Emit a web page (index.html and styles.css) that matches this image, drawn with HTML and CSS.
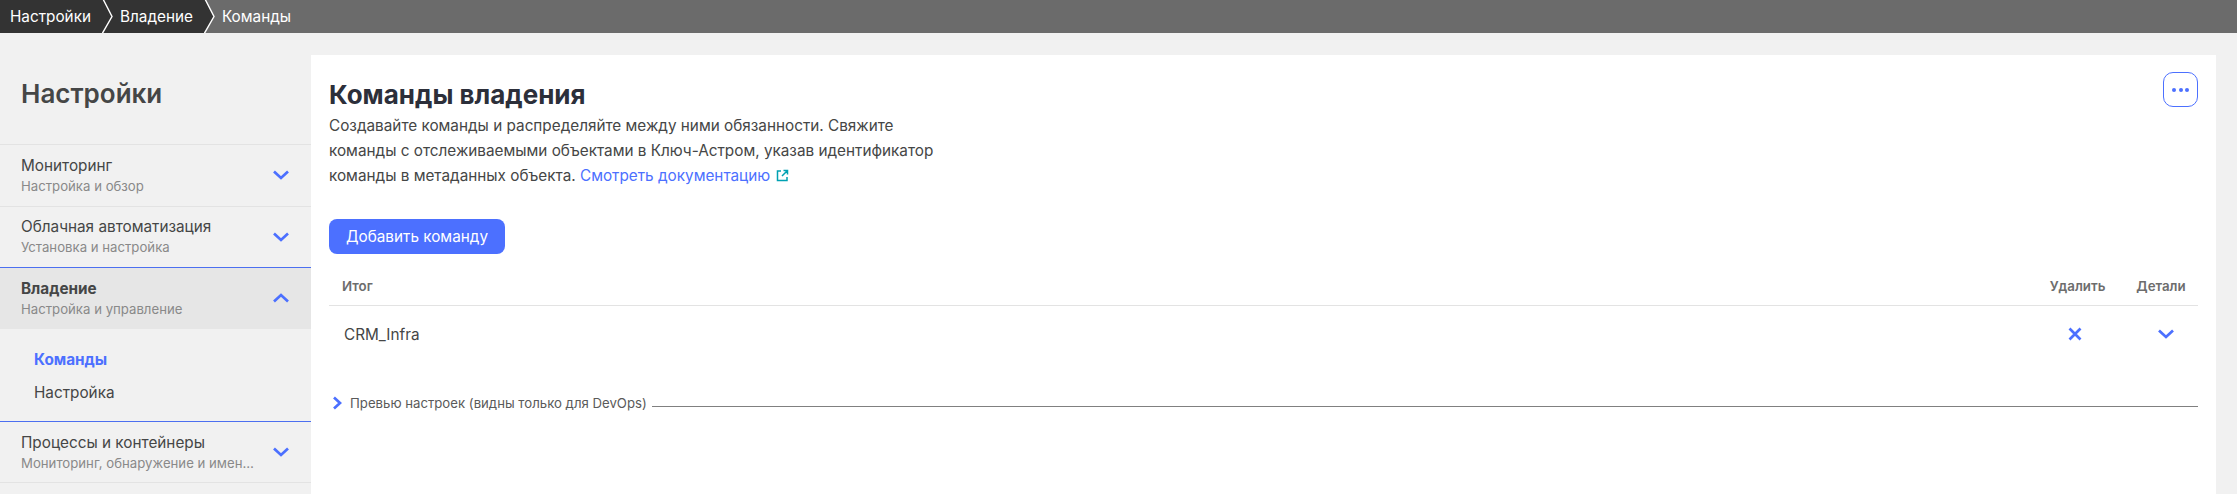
FILE: index.html
```html
<!DOCTYPE html>
<html lang="ru">
<head>
  <meta charset="UTF-8">
  <title>Команды владения</title>
  <link rel="stylesheet" href="styles.css">
</head>
<body>
  <nav class="crumbs">
    <a class="crumb">Настройки</a>
    <svg class="crumb-sep" width="11" height="33" viewBox="0 0 11 33"><path d="M1 -1 L10 16.5 L0 34" fill="none" stroke="#fff" stroke-width="1.4"/></svg>
    <a class="crumb">Владение</a>
    <svg class="crumb-sep crumb-sep-end" width="11" height="33" viewBox="0 0 11 33"><path d="M1 -1 L10 16.5 L0 34 L0 -1 Z" fill="#333"/><path d="M1 -1 L10 16.5 L0 34" fill="none" stroke="#fff" stroke-width="1.4"/></svg>
    <a class="crumb crumb-last">Команды</a>
  </nav>

  <div class="layout">
    <aside class="sidebar">
      <h2 class="sidebar-title">Настройки</h2>

      <div class="nav-item">
        <div class="nav-text">
          <div class="nav-name">Мониторинг</div>
          <div class="nav-sub">Настройка и обзор</div>
        </div>
        <svg class="chev" width="18" height="12" viewBox="0 0 18 12"><path d="M2 2.5 L9 9 L16 2.5"/></svg>
      </div>
      <div class="nav-item">
        <div class="nav-text">
          <div class="nav-name">Облачная автоматизация</div>
          <div class="nav-sub">Установка и настройка</div>
        </div>
        <svg class="chev" width="18" height="12" viewBox="0 0 18 12"><path d="M2 2.5 L9 9 L16 2.5"/></svg>
      </div>
      <div class="nav-item nav-open">
        <div class="nav-text">
          <div class="nav-name">Владение</div>
          <div class="nav-sub">Настройка и управление</div>
        </div>
        <svg class="chev" width="18" height="12" viewBox="0 0 18 12"><path d="M2 9.5 L9 3 L16 9.5"/></svg>
      </div>
      <div class="subnav">
        <a class="subnav-link active">Команды</a>
        <a class="subnav-link">Настройка</a>
      </div>
      <div class="nav-item">
        <div class="nav-text">
          <div class="nav-name">Процессы и контейнеры</div>
          <div class="nav-sub">Мониторинг, обнаружение и именование</div>
        </div>
        <svg class="chev" width="18" height="12" viewBox="0 0 18 12"><path d="M2 2.5 L9 9 L16 2.5"/></svg>
      </div>
    </aside>

    <main class="card">
      <div class="card-head">
        <div class="intro">
          <h1>Команды владения</h1>
          <p>Создавайте команды и распределяйте между ними обязанности. Свяжите команды с отслеживаемыми объектами в Ключ-Астром, указав идентификатор команды в метаданных объекта. <a class="doc-link">Смотреть документацию</a>
            <svg class="ext" width="13" height="13" viewBox="0 0 13 13"><path d="M5 2 H1.5 V11.5 H11 V8 M7.5 1.5 H11.5 V5.5 M11.5 1.5 L6 7"/></svg>
          </p>
        </div>
        <button class="more"><span></span><span></span><span></span></button>
      </div>

      <button class="btn-add">Добавить команду</button>

      <div class="table-head">
        <div class="col-name">Итог</div>
        <div class="col-del">Удалить</div>
        <div class="col-det">Детали</div>
      </div>
      <div class="table-row">
        <div class="col-name">CRM_Infra</div>
        <div class="col-del">
          <svg class="icon icon-x" width="16" height="16" viewBox="0 0 16 16"><path d="M2.5 2.5 L13.5 13.5 M13.5 2.5 L2.5 13.5"/></svg>
        </div>
        <div class="col-det">
          <svg class="icon icon-chev" width="18" height="12" viewBox="0 0 18 12"><path d="M2 2.5 L9 9 L16 2.5"/></svg>
        </div>
      </div>

      <div class="preview">
        <svg class="icon" width="10" height="14" viewBox="0 0 10 14"><path d="M2 1.5 L8 7 L2 12.5"/></svg>
        <span class="preview-text">Превью настроек (видны только для DevOps)</span>
        <span class="preview-line"></span>
      </div>
    </main>
  </div>
</body>
</html>
```

FILE: styles.css
```css
* { box-sizing: border-box; }
html, body { height: 100%; }
body {
  margin: 0;
  background: #f1f1f1;
  font-family: Inter, "Noto Sans", sans-serif;
  color: #454646;
  overflow: hidden;
}

.crumbs {
  display: flex;
  align-items: center;
  height: 33px;
  background: #6b6b6b;
  color: #fff;
  font-size: 15.3px;
}
.crumb {
  display: flex;
  align-items: center;
  height: 33px;
  padding: 0 11px 0 10px;
  background: #333;
  white-space: nowrap;
}
.crumb-sep { background: #333; flex: none; }
.crumb-sep-end { background: #6b6b6b; }
.crumb-sep + .crumb { padding-left: 7px; }
.crumb-sep + .crumb-last { background: none; padding-left: 7px; }

.layout { display: flex; height: 461px; }

.sidebar { width: 311px; flex: none; }
.sidebar-title {
  margin: 0;
  padding: 44px 0 0 21px;
  height: 111px;
  font-size: 26px;
  line-height: 34px;
  font-weight: 600;
  color: #454646;
}
.nav-item {
  display: flex;
  align-items: center;
  justify-content: space-between;
  height: 61.5px;
  padding: 0 21px 0 21px;
  border-top: 1px solid #e3e3e3;
}
.nav-item:last-child { border-bottom: 1px solid #e3e3e3; height: 62px; }
.nav-text { min-width: 0; padding-top: 1px; }
.nav-name { font-size: 15.3px; line-height: 21px; color: #454646; }
.nav-sub {
  font-size: 13.2px;
  line-height: 21px;
  color: #898989;
  width: 234px;
  white-space: nowrap;
  overflow: hidden;
  text-overflow: ellipsis;
}
.nav-open {
  background: #e6e6e6;
  border-top: 1px solid #4c6ff0;
}
.nav-open .nav-name { font-weight: 700; }
.chev { flex: none; }
.chev path, .icon path {
  fill: none;
  stroke: #4c70ff;
  stroke-width: 2.7;
}

.subnav {
  display: flex;
  flex-direction: column;
  height: 92.5px;
  padding: 21px 0 0 34px;
  gap: 13px;
  font-size: 15.3px;
  line-height: 20px;
}
.subnav + .nav-item { border-top: 1px solid #4c6ff0; }
.subnav-link.active { color: #4c70ff; font-weight: 700; }

.card {
  flex: 1;
  margin: 22px 21px 0 0;
  padding: 17px 18px 18px;
  background: #fff;
}
.card-head { display: flex; justify-content: space-between; align-items: flex-start; }
.intro { width: 625px; padding-top: 5px; }
h1 {
  margin: 0;
  font-size: 26px;
  line-height: 36px;
  font-weight: 700;
  color: #2c2f3a;
}
.intro p {
  margin: 0;
  font-size: 15.3px;
  line-height: 25px;
  color: #454646;
}
.doc-link { color: #4c70ff; }
.ext { margin-left: 2px; vertical-align: -1px; }
.ext path { fill: none; stroke: #00a1b2; stroke-width: 1.5; }

.more {
  display: flex;
  align-items: center;
  justify-content: center;
  gap: 2.5px;
  width: 35px;
  height: 35px;
  padding: 0;
  background: #fff;
  border: 1px solid #4c70ff;
  border-radius: 10px;
}
.more span { width: 4px; height: 4px; border-radius: 50%; background: #4c70ff; }

.btn-add {
  display: block;
  width: 176px;
  height: 35px;
  margin-top: 31px;
  padding: 0;
  border: none;
  border-radius: 8px;
  background: #4c70ff;
  color: #fff;
  font-family: inherit;
  font-size: 15.3px;
}

.table-head, .table-row { display: flex; align-items: center; }
.table-head {
  align-items: flex-end;
  height: 52px;
  padding-bottom: 10px;
  font-size: 13.3px;
  line-height: 18px;
  font-weight: 600;
  color: #6d6d6d;
  border-bottom: 1px solid #e3e3e3;
}
.table-head .col-name { padding-left: 13px; }
.table-row { height: 56px; font-size: 15.3px; }
.table-row .col-name { padding-left: 15px; }
.col-name { flex: 1; }
.col-del { width: 73px; text-align: center; margin-right: 10px; }
.col-det { width: 74px; text-align: center; }
.icon { display: block; }
.icon-x { margin-left: 26px; }
.icon-chev { margin-left: 33px; }

.preview {
  display: flex;
  align-items: center;
  height: 20px;
  margin-top: 31px;
  padding-left: 3px;
  font-size: 13.2px;
  color: #5a5a5a;
}
.preview-text { margin-left: 8px; white-space: nowrap; }
.preview-line { flex: 1; height: 1px; margin: 6px 0 0 5px; background: #808080; }
```
